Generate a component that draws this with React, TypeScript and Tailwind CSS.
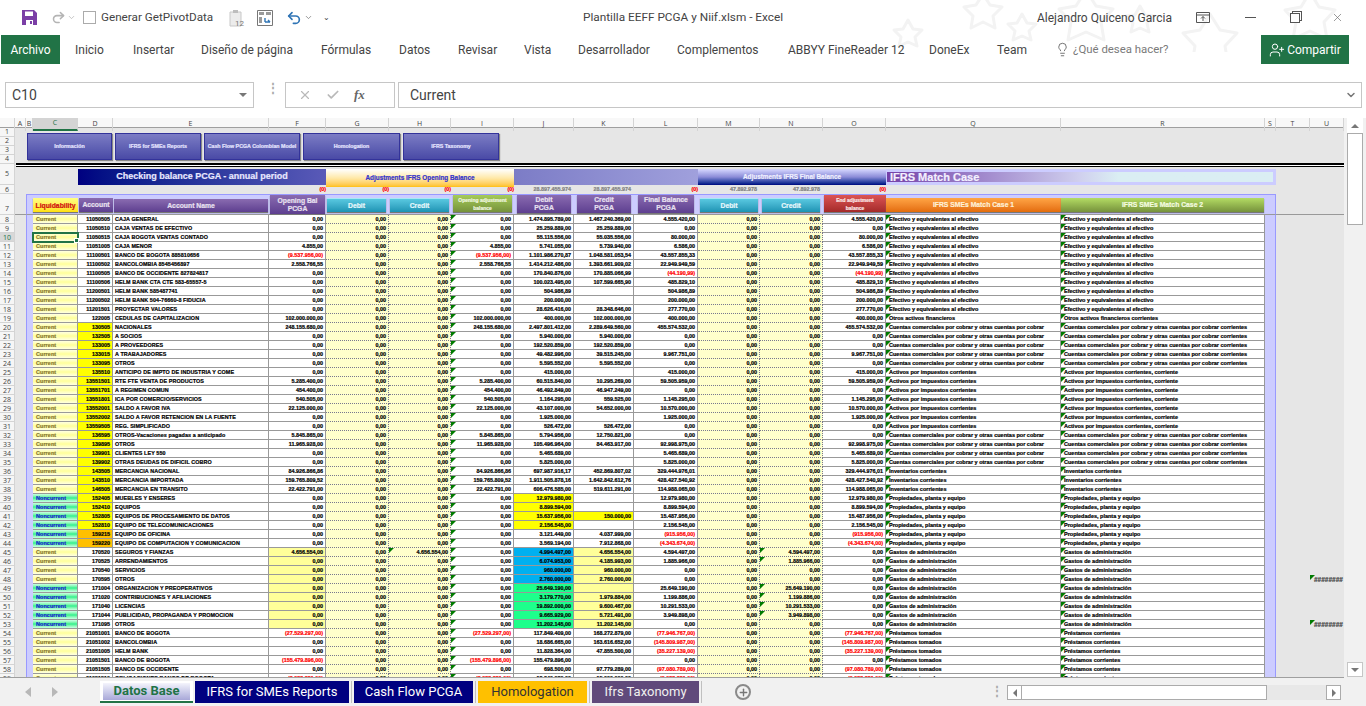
import { Check, ChevronDown, Lightbulb, Plus, Redo2, Undo2, UserPlus, X } from "lucide-react";
import clsx from "clsx";

const GRID =
  "grid grid-cols-[15px_11px_7px_45px_35px_156px_57px_63px_62px_63px_60px_60px_64px_62px_63px_63px_175px_204px_11px_34px_34px]";

const columns = ["A", "B", "C", "D", "E", "F", "G", "H", "I", "J", "K", "L", "M", "N", "O", "Q", "R", "S", "T", "U"];

const menu = [
  { label: "Inicio", w: "w-[29px]" },
  { label: "Insertar", w: "w-[39px]" },
  { label: "Diseño de página", w: "w-[91px]" },
  { label: "Fórmulas", w: "w-[49px]" },
  { label: "Datos", w: "w-[30px]" },
  { label: "Revisar", w: "w-[37px]" },
  { label: "Vista", w: "w-[25px]" },
  { label: "Desarrollador", w: "w-[70px]" },
  { label: "Complementos", w: "w-[82px]" },
  { label: "ABBYY FineReader 12", w: "w-[112px]" },
  { label: "DoneEx", w: "w-[39px]" },
  { label: "Team", w: "w-[30px]" },
];

// liquidity, account, name, F, I, J, K, L, N (only when the adjustment moves it)
type Row = [string, string, string, string, string, string, string, string, string?];

const rows: Row[] = [
  ["C", "11050505", "CAJA GENERAL", "0,00", "0,00", "1.474.895.789,00", "1.467.240.369,00", "4.555.420,00"],
  ["C", "11050510", "CAJA VENTAS DE EFECTIVO", "0,00", "0,00", "25.259.889,00", "25.259.889,00", "0,00"],
  ["C", "11050515", "CAJA BOGOTA VENTAS CONTADO", "0,00", "0,00", "55.115.556,00", "55.035.556,00", "80.000,00"],
  ["C", "11051005", "CAJA MENOR", "4.855,00", "4.855,00", "5.741.055,00", "5.739.940,00", "6.586,00"],
  ["C", "11100501", "BANCO DE BOGOTA 885810656", "(9.537.956,00)", "(9.537.956,00)", "1.101.986.270,87", "1.048.581.053,54", "43.557.855,33"],
  ["C", "11100502", "BANCOLOMBIA 8545456897", "2.558.766,55", "2.558.766,55", "1.414.212.486,00", "1.393.661.909,02", "22.949.949,59"],
  ["C", "11100505", "BANCO DE OCCIDENTE 827824817", "0,00", "0,00", "170.840.876,00", "170.885.066,99", "(44.190,99)"],
  ["C", "11100506", "HELM BANK CTA CTE 583-65557-5", "0,00", "0,00", "100.023.495,00", "107.599.665,90", "485.829,10"],
  ["C", "11200501", "HELM BANK 585487741", "0,00", "0,00", "504.986,89", "", "504.986,89"],
  ["C", "11200502", "HELM BANK 504-76660-8 FIDUCIA", "0,00", "0,00", "200.000,00", "", "200.000,00"],
  ["C", "11201501", "PROYECTAR VALORES", "0,00", "0,00", "28.626.416,00", "28.348.646,00", "277.770,00"],
  ["C", "122005", "CEDULAS DE CAPITALIZACION", "102.000.000,00", "102.000.000,00", "400.000,00", "102.000.000,00", "400.000,00"],
  ["C", "130505", "NACIONALES", "248.155.680,00", "248.155.680,00", "2.497.801.412,00", "2.289.649.560,00", "455.574.532,00"],
  ["C", "132505", "A SOCIOS", "0,00", "0,00", "5.940.000,00", "5.940.000,00", "0,00"],
  ["C", "133005", "A PROVEEDORES", "0,00", "0,00", "192.520.859,00", "192.520.859,00", "0,00"],
  ["C", "133015", "A TRABAJADORES", "0,00", "0,00", "49.482.996,00", "39.515.245,00", "9.967.751,00"],
  ["C", "133095", "OTROS", "0,00", "0,00", "5.595.552,00", "5.595.552,00", "0,00"],
  ["C", "135510", "ANTICIPO DE IMPTO DE INDUSTRIA Y COME", "0,00", "0,00", "415.000,00", "", "415.000,00"],
  ["C", "13551501", "RTE FTE VENTA DE PRODUCTOS", "5.285.400,00", "5.285.400,00", "60.515.840,00", "10.295.269,00", "59.505.959,00"],
  ["C", "13551701", "A REGIMEN COMUN", "454.400,00", "454.400,00", "46.492.849,00", "46.947.249,00", "0,00"],
  ["C", "13551801", "ICA POR COMERCIO/SERVICIOS", "540.505,00", "540.505,00", "1.164.295,00", "559.525,00", "1.145.295,00"],
  ["C", "13552001", "SALDO A FAVOR IVA", "22.125.000,00", "22.125.000,00", "43.107.000,00", "54.652.000,00", "10.570.000,00"],
  ["C", "13552002", "SALDO A FAVOR RETENCION EN LA FUENTE", "0,00", "0,00", "1.925.000,00", "", "1.925.000,00"],
  ["C", "13559505", "REG. SIMPLIFICADO", "0,00", "0,00", "526.472,00", "526.472,00", "0,00"],
  ["C", "136595", "OTROS-Vacaciones pagadas a anticipado", "5.845.865,00", "5.845.865,00", "5.794.956,00", "12.750.821,00", "0,00"],
  ["C", "139895", "OTROS", "11.965.928,00", "11.965.928,00", "105.496.964,00", "84.463.917,00", "92.998.975,00"],
  ["C", "139901", "CLIENTES LEY 550", "0,00", "0,00", "5.465.689,00", "", "5.465.689,00"],
  ["C", "139902", "OTRAS DEUDAS DE DIFICIL COBRO", "0,00", "0,00", "5.825.000,00", "", "5.825.000,00"],
  ["C", "143505", "MERCANCIA NACIONAL", "84.926.866,86", "84.926.866,86", "697.987.916,17", "452.869.807,02", "329.444.976,01"],
  ["C", "143510", "MERCANCIA IMPORTADA", "159.765.809,52", "159.765.809,52", "1.911.505.878,16", "1.642.842.612,76", "428.427.540,92"],
  ["C", "146505", "MERCANCIA EN TRANSITO", "22.422.791,00", "22.422.791,00", "606.476.585,00", "519.611.291,00", "114.988.065,00"],
  ["N", "152405", "MUEBLES Y ENSERES", "0,00", "0,00", "12.979.980,00", "", "12.979.980,00"],
  ["N", "152410", "EQUIPOS", "0,00", "0,00", "8.899.594,00", "", "8.899.594,00"],
  ["N", "152805", "EQUIPOS DE PROCESAMIENTO DE DATOS", "0,00", "0,00", "15.637.956,00", "150.000,00", "15.487.956,00"],
  ["N", "152810", "EQUIPO DE TELECOMUNICACIONES", "0,00", "0,00", "2.156.545,00", "", "2.156.545,00"],
  ["N", "159215", "EQUIPO DE OFICINA", "0,00", "0,00", "3.121.449,00", "4.037.999,00", "(915.956,00)"],
  ["N", "159220", "EQUIPO DE COMPUTACION Y COMUNICACION", "0,00", "0,00", "3.569.194,00", "7.912.868,00", "(4.343.674,00)"],
  ["C", "170520", "SEGUROS Y FIANZAS", "4.656.554,00", "0,00", "4.994.497,00", "4.656.554,00", "4.594.497,00", "4.594.497,00"],
  ["C", "170525", "ARRENDAMIENTOS", "0,00", "0,00", "6.074.953,00", "4.185.993,00", "1.885.966,00", "1.885.966,00"],
  ["C", "170540", "SERVICIOS", "0,00", "0,00", "960.000,00", "960.000,00", "0,00"],
  ["C", "170595", "OTROS", "0,00", "0,00", "2.760.000,00", "2.760.000,00", "0,00"],
  ["N", "171004", "ORGANIZACION Y PREOPERATIVOS", "0,00", "0,00", "25.649.190,00", "", "25.649.190,00", "25.649.190,00"],
  ["N", "171020", "CONTRIBUCIONES Y AFILIACIONES", "0,00", "0,00", "3.179.770,00", "1.979.884,00", "1.199.886,00", "1.199.886,00"],
  ["N", "171040", "LICENCIAS", "0,00", "0,00", "19.892.000,00", "9.600.467,00", "10.291.533,00", "10.291.533,00"],
  ["N", "171044", "PUBLICIDAD, PROPAGANDA Y PROMOCION", "0,00", "0,00", "9.665.929,00", "5.721.491,00", "3.949.898,00", "3.949.898,00"],
  ["N", "171095", "OTROS", "0,00", "0,00", "11.202.145,00", "11.202.145,00", "0,00"],
  ["C", "21051001", "BANCO DE BOGOTA", "(27.529.297,00)", "(27.529.297,00)", "117.849.409,00", "168.272.879,00", "(77.946.767,00)"],
  ["C", "21051002", "BANCOLOMBIA", "0,00", "0,00", "18.686.665,00", "163.616.652,00", "(145.809.987,00)"],
  ["C", "21051005", "HELM BANK", "0,00", "0,00", "11.828.364,00", "47.855.500,00", "(35.227.139,00)"],
  ["C", "21051501", "BANCO DE BOGOTA", "(155.479.896,00)", "(155.479.896,00)", "155.479.896,00", "", "0,00"],
  ["C", "21051505", "BANCO DE OCCIDENTE", "0,00", "0,00", "698.500,00", "97.779.289,00", "(97.080.789,00)"],
  ["C", "21051510", "OBLIGACIONES BANCO DE BOGOTA", "(8.933.831,00)", "(8.933.831,00)", "13.849.989,00", "15.000.000,00", "(9.933.831,00)"],
];

const matchCase = (n: number): [string, string] => {
  if (n === 19) return ["Otros activos financieros", "Otros activos financieros corrientes"];
  if ((n >= 20 && n <= 24) || (n >= 32 && n <= 35))
    return ["Cuentas comerciales por cobrar y otras cuentas por cobrar", "Cuentas comerciales por cobrar y otras cuentas por cobrar corrientes"];
  if (n >= 25 && n <= 31) return ["Activos por impuestos corrientes", "Activos por impuestos corrientes, corriente"];
  if (n >= 36 && n <= 38) return ["Inventarios corrientes", "Inventarios corrientes"];
  if (n >= 39 && n <= 44) return ["Propiedades, planta y equipo", "Propiedades, planta y equipo"];
  if (n >= 45 && n <= 53) return ["Gastos de administración", "Gastos de administración"];
  if (n >= 54) return ["Préstamos tomados", "Préstamos corrientes"];
  return ["Efectivo y equivalentes al efectivo", "Efectivo y equivalentes al efectivo"];
};

const Mark = () => (
  <span className="absolute left-0 top-0 h-[5px] w-[5px] bg-[#007a00] [clip-path:polygon(0_0,100%_0,0_100%)]" />
);

const Num = ({ v, className, mark, dotted }: { v?: string; className?: string; mark?: boolean; dotted?: boolean }) => (
  <div
    className={clsx(
      "relative h-[9px] overflow-hidden whitespace-nowrap border-b border-r pr-[2px] text-right",
      dotted ? "border-dotted border-[#77778f] bg-[#ffffcc]" : "border-[#999999]",
      v?.startsWith("(") ? "text-[#ff0000]" : "text-black",
      className
    )}
  >
    {mark && <Mark />}
    {v}
  </div>
);

const RowHead = ({ n, active, className }: { n: number; active?: boolean; className?: string }) => (
  <div
    className={clsx(
      "flex items-center justify-center border-b border-r border-[#d4d4d4] font-['Open_Sans',sans-serif] text-[7px] font-normal [-webkit-text-stroke:0]",
      active ? "bg-[#d8d8d8] text-[#217346]" : "bg-[#f6f6f6] text-[#444444]",
      className
    )}
  >
    {n}
  </div>
);

const DataRow = ({ row, n }: { row: Row; n: number }) => {
  const [liq, acct, name, f, i, j, k, l, adj] = row;
  const [q, r] = matchCase(n);
  const overflow = n === 48 || n === 53;
  return (
    <div className={clsx(GRID, "h-[9px] leading-[9px]")}>
      <RowHead n={n} active={n === 10} className="h-[9px]" />
      <div className="bg-[#e6e6e6]" />
      <div className="border-l border-[#9999ff] bg-[#ccccff]" />
      <div
        className={clsx(
          "relative h-[9px] whitespace-nowrap border-b border-r border-[#999999] pl-[3px] tracking-[0.1px]",
          liq === "C"
            ? "bg-linear-to-b from-[#ffffe0] via-[#ffff99] to-[#ffffe0] text-[#85752f]"
            : "bg-linear-to-b from-[#c8ffe4] via-[#22f08c] to-[#c8ffe4] text-[#1a1ad0]",
          n === 10 && "z-10 outline-2 -outline-offset-1 outline-[#217346]"
        )}
      >
        {liq === "C" ? "Current" : "Noncurrent"}
        {n === 10 && <span className="absolute -bottom-[2px] -right-[2px] h-[5px] w-[5px] border border-white bg-[#217346]" />}
      </div>
      <Num
        v={acct}
        className={clsx(
          n >= 20 && n <= 42 && "bg-[#ffff00]",
          (n === 43 || n === 44) && "bg-[#ffc000]",
          (n < 20 || n > 44) && "bg-white"
        )}
      />
      <div className="h-[9px] overflow-hidden whitespace-nowrap border-b border-r border-[#999999] bg-white pl-[2px] text-left tracking-[0.1px] text-black">
        {name}
      </div>
      <Num v={f} className={n >= 45 && n <= 53 ? "bg-[#ffff99]" : "bg-white"} />
      <Num v="0,00" dotted />
      <Num v={n === 45 ? "4.656.554,00" : "0,00"} dotted mark={n === 45} />
      <Num v={i} mark className="bg-white" />
      <Num
        v={j}
        className={clsx(
          n >= 39 && n <= 42 && "bg-[#ffff00]",
          n >= 45 && n <= 48 && "bg-[#00b0f0]",
          n >= 49 && n <= 53 && "bg-[#1eff8c]",
          (n < 39 || n === 43 || n === 44 || n > 53) && "bg-white"
        )}
      />
      <Num
        v={k}
        className={clsx(n === 41 ? "bg-[#ffff00]" : n >= 45 && n <= 53 ? "bg-[#ffff99]" : "bg-white")}
      />
      <Num v={l} className="bg-white" />
      <Num v="0,00" dotted />
      <Num v={adj ?? "0,00"} dotted mark={!!adj} />
      <Num v={adj ? "0,00" : l} className="bg-white" />
      <div className="relative h-[9px] overflow-hidden whitespace-nowrap border-b border-r border-[#999999] bg-white pl-[3px] text-[5.5px] text-black">
        <Mark />
        {q}
      </div>
      <div className="relative h-[9px] overflow-hidden whitespace-nowrap border-b border-r border-[#999999] bg-white pl-[3px] text-[5.5px] text-black">
        <Mark />
        {r}
      </div>
      <div className="border-r border-[#9999ff] bg-[#ccccff]" />
      <div className="bg-[#e6e6e6]" />
      <div className="relative overflow-hidden bg-[#e6e6e6]">
        {overflow && (
          <>
            <Mark />
            <span className="pl-[4px] text-[6.5px]">########</span>
          </>
        )}
      </div>
    </div>
  );
};

const MacroButton = ({ label, w }: { label: string; w: string }) => (
  <div
    className={clsx(
      "flex h-[27px] items-center justify-center whitespace-nowrap border border-[#33339a] bg-linear-to-b from-[#7c7cc4] to-[#4a4aa6] text-[5.3px] font-bold text-[#e4e4ff] shadow-[1px_1px_1px_#888888]",
      w
    )}
  >
    {label}
  </div>
);

const Head = ({ label, tone, className }: { label: string; tone: string; className?: string }) => (
  <div
    className={clsx(
      "flex items-center justify-center whitespace-pre-line text-center font-bold leading-[8px] shadow-[0_1px_1px_#777777]",
      tone,
      className
    )}
  >
    {label}
  </div>
);

const purple = "bg-linear-to-b from-[#8a6bb0] to-[#5e3f90] text-[#e8e0f0]";
const teal = "border-t border-[#a8e8f4] bg-linear-to-b from-[#58c8e0] to-[#1c94b4] text-[#e8f8fc]";

const SevenCell = ({ children, className }: { children?: React.ReactNode; className?: string }) => (
  <div className={clsx("flex h-[21px] flex-col border-b border-t border-b-[#999999] border-t-[#9999ff] bg-[#ccccff]", className)}>
    {children}
  </div>
);

const Stars = () => (
  <svg className="absolute right-0 top-0" width="480" height="52" viewBox="0 0 480 52" fill="none" stroke="#f3f3f3" strokeWidth="3" strokeLinejoin="round">
    <path d="M22 20l5 9 9 1-7 7 2 9-9-4-9 4 2-9-7-7 9-1z" />
    <path d="M97 -6l7 11 12 2-9 9 2 12-12-6-12 6 2-12-9-9 12-2z" />
    <path d="M136 14l5 9 9 1-7 7 2 9-9-4-9 4 2-9-7-7 9-1z" />
    <path d="M200 -10l10 16 17 3-12 13 3 18-18-8-18 8 3-18-12-13 17-3z" />
    <path d="M254 6l5 9 9 1-7 7 2 9-9-4-9 4 2-9-7-7 9-1z" />
    <path d="M324 14l10 16 17 3-12 13 3 18-18-8-18 8 3-18-12-13 17-3z" />
    <path d="M424 -8l9 15 16 3-11 12 3 17-17-8-17 8 3-17-11-12 16-3z" />
  </svg>
);

export default function App() {
  return (
    <div className="relative flex h-[706px] w-[1366px] flex-col overflow-hidden bg-white font-['Roboto',sans-serif] text-[#444444]">
      {/* title bar */}
      <div className="relative flex h-[35px] items-center text-[11.8px]">
        <Stars />
        <div className="flex w-[583px] items-center pl-[22px]">
          <svg width="15" height="15" viewBox="0 0 15 15">
            <path d="M0 0h12l3 3v12H0z" fill="#7b3fa6" />
            <path d="M3 1.5h8v4.5H3z" fill="#fff" />
            <path d="M4 10h7v5H4z" fill="#fff" />
            <path d="M8 11h2v3H8z" fill="#7b3fa6" />
          </svg>
          <Redo2 className="ml-[14px] h-[15px] w-[15px] text-[#b4b4b4]" strokeWidth={2.5} />
          <ChevronDown className="ml-[1px] h-[9px] w-[9px] text-[#b4b4b4]" />
          <span className="ml-[7px] h-[13px] w-[13px] border border-[#ababab] bg-white" />
          <span className="ml-[5px] w-[128px] whitespace-nowrap text-[11.7px]">Generar GetPivotData</span>
          <svg width="16" height="18" viewBox="0 0 16 18" fill="none">
            <path d="M1 3h11v14H1z" fill="#ececec" stroke="#c8c8c8" />
            <path d="M4 1h5v3H4z" fill="#bdbdbd" />
            <text x="6" y="17" fontSize="8" fill="#777777">12</text>
          </svg>
          <svg className="ml-[12px]" width="16" height="16" viewBox="0 0 16 16" fill="none">
            <path d="M.5.5h15v15H.5z" stroke="#777777" />
            <path d="M2 2h5v3H2zM9 2h5v3H9zM2 7h3v6H2z" fill="#9a9a9a" />
            <path d="M8 12h5M13 12l-2-2M8 8v4" stroke="#2f74b5" strokeWidth="1.4" />
          </svg>
          <Undo2 className="ml-[13px] h-[16px] w-[16px] text-[#2f74b5]" strokeWidth={2.5} />
          <ChevronDown className="ml-[2px] h-[9px] w-[9px] text-[#777777]" />
          <span className="ml-[10px] text-[8px] leading-none">⌄</span>
        </div>
        <span className="w-[454px] whitespace-nowrap">Plantilla EEFF PCGA y Niif.xlsm - Excel</span>
        <span className="relative w-[159px] whitespace-nowrap text-[12px]">Alejandro Quiceno Garcia</span>
        <svg className="relative" width="14" height="11" viewBox="0 0 14 11" fill="none" stroke="#555555">
          <path d="M.5.5h13v10H.5zM.5 3h13M7 9V4.5M5 6.5l2-2 2 2" />
        </svg>
        <span className="relative ml-[35px] h-px w-[11px] bg-[#555555]" />
        <span className="relative ml-[34px] h-[10px] w-[10px] border border-[#555555] bg-white shadow-[2px_-2px_0_-1px_#fff,2px_-2px_0_0_#555555]" />
        <X className="relative ml-[31px] h-[13px] w-[13px] text-[#666666]" strokeWidth={1.2} />
      </div>

      {/* ribbon tabs */}
      <div className="relative flex h-[29px] items-center text-[12px]">
        <div className="ml-px flex h-[29px] w-[59px] items-center justify-center bg-[#217346] text-white">Archivo</div>
        <div className="ml-[15px] flex gap-[29px]">
          {menu.map((m) => (
            <span key={m.label} className={clsx("whitespace-nowrap", m.w)}>
              {m.label}
            </span>
          ))}
        </div>
        <Lightbulb className="ml-[28px] h-[15px] w-[15px] text-[#555555]" strokeWidth={1.3} />
        <span className="ml-[3px] w-[100px] whitespace-nowrap text-[11.4px] text-[#7a7a7a]">¿Qué desea hacer?</span>
        <div className="ml-[88px] flex h-[29px] w-[88px] items-center justify-center gap-[2px] bg-[#217346] text-white">
          <UserPlus className="h-[16px] w-[16px]" strokeWidth={1.5} />
          <span>Compartir</span>
        </div>
      </div>

      {/* formula bar */}
      <div className="flex h-[54px] items-start pt-[18px] text-[14px]">
        <div className="ml-[5px] flex h-[26px] w-[249px] items-center justify-between border border-[#c6c6c6] pl-[6px] pr-[6px]">
          <span>C10</span>
          <span className="h-0 w-0 border-x-[4px] border-t-[4px] border-x-transparent border-t-[#777777]" />
        </div>
        <span className="ml-[13px] mt-[3px] w-[4px] text-[12px] font-bold leading-[6px] text-[#aaaaaa]">⋮</span>
        <div className="ml-[14px] flex h-[26px] w-[110px] items-center gap-[14px] border border-[#c6c6c6] pl-[12px]">
          <X className="h-[14px] w-[14px] text-[#b9b9b9]" strokeWidth={2} />
          <Check className="h-[14px] w-[14px] text-[#b9b9b9]" strokeWidth={3} />
          <span className="font-['Liberation_Serif',serif] text-[13px] font-bold italic text-[#666666]">fx</span>
        </div>
        <div className="ml-[3px] flex h-[26px] w-[964px] items-center justify-between border border-[#c6c6c6] pl-[11px] pr-[4px]">
          <span>Current</span>
          <ChevronDown className="h-[12px] w-[12px] text-[#777777]" strokeWidth={3} />
        </div>
      </div>

      {/* sheet + vertical scrollbar */}
      <div className="flex min-h-0 flex-1">
        <div className="h-full w-[1344px] overflow-hidden border-b border-[#9f9f9f] bg-[#e6e6e6] font-['Liberation_Sans',sans-serif] text-[5.4px] font-bold [-webkit-text-stroke:0.2px]">
          {/* column letters */}
          <div className={clsx(GRID, "h-[10px] border-b border-[#9f9f9f] bg-[#f8f8f8]")}>
            <div className="border-r border-[#d4d4d4]" />
            {columns.map((c) => (
              <div
                key={c}
                className={clsx(
                  "flex items-center justify-center border-r border-[#d4d4d4] font-['Open_Sans',sans-serif] text-[7px] font-normal [-webkit-text-stroke:0]",
                  c === "C" ? "border-b-2 border-b-[#217346] bg-[#d4d4d4] text-[#217346]" : "text-[#444444]"
                )}
              >
                {c}
              </div>
            ))}
          </div>

          {/* rows 1-4: macro buttons */}
          <div className="grid grid-cols-[15px_1fr] grid-rows-[9px_9px_9px_9px]">
            {[1, 2, 3, 4].map((n) => (
              <RowHead key={n} n={n} className="col-start-1" />
            ))}
            <div className="col-start-2 row-span-4 row-start-1 flex gap-[3px] pl-[12px] pt-[5px]">
              <MacroButton label="Información" w="w-[85px]" />
              <MacroButton label="IFRS for SMEs Reports" w="w-[86px]" />
              <MacroButton label="Cash Flow PCGA Colombian Model" w="w-[96px]" />
              <MacroButton label="Homologation" w="w-[97px]" />
              <MacroButton label="IFRS Taxonomy" w="w-[96px]" />
            </div>
          </div>

          {/* row 5: section bands */}
          <div className={clsx(GRID, "h-[21px] grid-rows-[21px]")}>
            <RowHead n={5} className="h-[21px]" />
            <div className="col-span-20 col-start-2 row-start-1 -mt-px ml-px h-[4px] border-b border-t-2 border-black bg-white" />
            <div className="col-span-3 col-start-5 row-start-1 mt-[5px] flex h-[16px] items-center justify-center bg-linear-to-r from-[#000080] to-[#5a5ab8] text-[9px] text-[#e8e8ff]">
              Checking balance PCGA - annual period
            </div>
            <div className="col-span-3 col-start-8 row-start-1 mt-[5px] flex h-[18px] items-center justify-center bg-linear-to-b from-white via-[#ffe9a8] to-[#ffc000] text-[6.4px] text-[#3333cc]">
              Adjustments IFRS Opening Balance
            </div>
            <div className="col-span-3 col-start-11 row-start-1 mt-[5px] h-[16px] bg-linear-to-r from-[#7c7cc6] to-[#a0a0dc]" />
            <div className="col-span-3 col-start-14 row-start-1 mt-[5px] flex h-[16px] items-center justify-center bg-linear-to-b from-[#d8d8ff] via-[#8c8cd8] to-[#000080] text-[6.4px] text-[#f0f0ff]">
              Adjustments IFRS Final Balance
            </div>
            <div className="col-span-3 col-start-17 row-start-1 mt-[5px] h-[16px] bg-[#ccccff] py-[3px] pl-[1px] pr-[3px]">
              <div className="flex h-[10px] items-center bg-linear-to-r from-[#7440a8] via-[#d0d0ee] via-50% to-[#daeef3] to-60% pl-[3px] text-[11px] text-[#f4f0ff]">
                IFRS Match Case
              </div>
            </div>
          </div>

          {/* row 6: control totals */}
          <div className={clsx(GRID, "h-[9px] leading-[9px]")}>
            <RowHead n={6} className="h-[9px]" />
            <div className="col-start-7 text-right text-[#ff0000]">(0)</div>
            <div className="text-right text-[#ff0000]">(0)</div>
            <div className="text-right text-[#ff0000]">(0)</div>
            <div className="text-right text-[#ff0000]">(0)</div>
            <div className="pr-[3px] text-right text-[#808080]">28.897.455.974</div>
            <div className="pr-[3px] text-right text-[#808080]">28.897.455.974</div>
            <div className="text-right text-[#ff0000]">(0)</div>
            <div className="pr-[3px] text-right text-[#808080]">47.892.978</div>
            <div className="pr-[3px] text-right text-[#808080]">47.892.978</div>
            <div className="text-right text-[#ff0000]">(0)</div>
          </div>

          {/* row 7: column titles */}
          <div className={clsx(GRID, "h-[21px] text-[6.8px]")}>
            <RowHead n={7} className="h-[21px] items-end" />
            <div className="border-b border-[#999999]" />
            <SevenCell className="border-l border-l-[#9999ff]" />
            <SevenCell className="pt-[3px]">
              <Head label="Liquidability" tone="bg-linear-to-b from-[#ffff80] to-[#ffe000] text-[#d01010]" className="h-[14px] leading-[9px]" />
            </SevenCell>
            <SevenCell className="pl-px pt-[3px]">
              <Head label="Account" tone={purple} className="h-[14px]" />
            </SevenCell>
            <SevenCell className="pl-px pr-px pt-[4px]">
              <Head label="Account Name" tone={purple} className="h-[13px]" />
            </SevenCell>
            <SevenCell className="px-px">
              <Head label={"Opening Bal\nPCGA"} tone={purple} className="h-[19px]" />
            </SevenCell>
            <SevenCell className="pl-px pr-[3px] pt-[3px]">
              <Head label="Debit" tone={teal} className="h-[14px]" />
            </SevenCell>
            <SevenCell className="pl-px pr-[2px] pt-[3px]">
              <Head label="Credit" tone={teal} className="h-[14px]" />
            </SevenCell>
            <SevenCell className="pl-[2px] pr-[2px]">
              <Head label={"Opening adjustment\nbalance"} tone="bg-linear-to-b from-[#a6cc5a] to-[#76923c] text-[#f0f8e0] text-[5px] leading-[7px]" className="h-[17px]" />
            </SevenCell>
            <SevenCell className="px-[3px]">
              <Head label={"Debit\nPCGA"} tone={purple} className="h-[18px]" />
            </SevenCell>
            <SevenCell className="px-[3px]">
              <Head label={"Credit\nPCGA"} tone={purple} className="h-[18px]" />
            </SevenCell>
            <SevenCell className="px-[4px]">
              <Head label={"Final Balance\nPCGA"} tone={purple} className="h-[18px]" />
            </SevenCell>
            <SevenCell className="pl-[2px] pr-[2px] pt-[3px]">
              <Head label="Debit" tone={teal} className="h-[14px]" />
            </SevenCell>
            <SevenCell className="pl-[2px] pr-[3px] pt-[3px]">
              <Head label="Credit" tone={teal} className="h-[14px]" />
            </SevenCell>
            <SevenCell className="pl-px">
              <Head label={"End adjustment\nbalance"} tone="bg-linear-to-b from-[#dc5454] to-[#a42a2a] text-[#fbe8e8] text-[5px] leading-[7px]" className="h-[17px]" />
            </SevenCell>
            <SevenCell className="pt-[3px]">
              <Head label="IFRS  SMEs Match Case 1" tone="bg-linear-to-b from-[#ffa544] to-[#e36c09] text-[#fff0d8]" className="h-[14px]" />
            </SevenCell>
            <SevenCell className="pr-px pt-[3px]">
              <Head label="IFRS  SMEs Match Case 2" tone="bg-linear-to-b from-[#b4dc64] to-[#76923c] text-[#f4fce0]" className="h-[14px]" />
            </SevenCell>
            <SevenCell className="border-r border-r-[#9999ff]" />
            <div className="border-b border-[#999999]" />
            <div className="border-b border-[#999999]" />
          </div>

          {rows.map((row, idx) => (
            <DataRow key={idx + 8} row={row} n={idx + 8} />
          ))}
        </div>

        <div className="flex w-[22px] flex-col items-center bg-[#f1f1f1] pl-[3px] pr-[3px]">
          <div className="flex h-[15px] w-[16px] items-center justify-center bg-white">
            <span className="h-0 w-0 border-x-[4px] border-b-[4px] border-x-transparent border-b-[#777777]" />
          </div>
          <div className="h-[92px] w-[16px] border border-[#ababab] bg-white" />
          <div className="flex-1" />
          <div className="mb-px flex h-[15px] w-[16px] items-center justify-center border border-[#c6c6c6] bg-white">
            <span className="h-0 w-0 border-x-[4px] border-t-[4px] border-x-transparent border-t-[#777777]" />
          </div>
        </div>
      </div>

      {/* sheet tabs */}
      <div className="flex h-[28px] items-start bg-[#f1f1f1] text-[13px]">
        <div className="flex h-[28px] w-[100px] items-center gap-[21px] pl-[25px]">
          <span className="h-0 w-0 border-y-[5px] border-r-[6px] border-y-transparent border-r-[#b8b8b8]" />
          <span className="h-0 w-0 border-y-[5px] border-l-[6px] border-y-transparent border-l-[#b8b8b8]" />
        </div>
        <div className="mt-[3px] flex h-[22px] w-[93px] items-center justify-center border-b-2 border-[#217346] bg-white px-[3px] pb-[2px] pt-[2px]">
          <span className="flex h-[17px] w-full items-center justify-center bg-linear-to-b from-[#f4f4fc] to-[#a8a8d8] font-bold text-[#217346]">Datos Base</span>
        </div>
        <div className="ml-[2px] mt-[3px] flex h-[22px] w-[154px] items-center justify-center whitespace-nowrap bg-[#000080] text-white">IFRS for SMEs Reports</div>
        <span className="ml-[2px] mt-[3px] h-[22px] w-px bg-[#c0c0c0]" />
        <div className="ml-[2px] mt-[3px] flex h-[22px] w-[119px] items-center justify-center whitespace-nowrap bg-[#000080] text-white">Cash Flow PCGA</div>
        <span className="ml-[2px] mt-[3px] h-[22px] w-px bg-[#c0c0c0]" />
        <div className="ml-[2px] mt-[3px] flex h-[22px] w-[109px] items-center justify-center whitespace-nowrap bg-[#ffc000] text-[#333333]">Homologation</div>
        <span className="ml-[2px] mt-[3px] h-[22px] w-px bg-[#c0c0c0]" />
        <div className="ml-[2px] mt-[3px] flex h-[22px] w-[107px] items-center justify-center whitespace-nowrap bg-[#604a7b] text-[#f0f0f0]">Ifrs Taxonomy</div>
        <span className="ml-[2px] mt-[3px] h-[22px] w-px bg-[#c0c0c0]" />
        <div className="ml-[33px] mt-[6px] flex h-[16px] w-[16px] items-center justify-center rounded-full border-2 border-[#8a8a8a]">
          <Plus className="h-[11px] w-[11px] text-[#777777]" strokeWidth={3} />
        </div>
        <span className="ml-[240px] mt-[6px] w-[4px] text-[12px] font-bold leading-[14px] text-[#aaaaaa]">⋮</span>
        <div className="ml-[12px] mt-[7px] flex h-[15px] w-[334px] items-stretch bg-[#e8e8e8]">
          <div className="flex w-[15px] items-center justify-center border border-[#ababab] bg-white">
            <span className="h-0 w-0 border-y-[4px] border-r-[4px] border-y-transparent border-r-[#777777]" />
          </div>
          <div className="w-[245px] border-y border-r border-[#ababab] bg-white" />
          <div className="flex-1" />
          <div className="flex w-[15px] items-center justify-center border border-[#ababab] bg-white">
            <span className="h-0 w-0 border-y-[4px] border-l-[4px] border-y-transparent border-l-[#777777]" />
          </div>
        </div>
      </div>
    </div>
  );
}
